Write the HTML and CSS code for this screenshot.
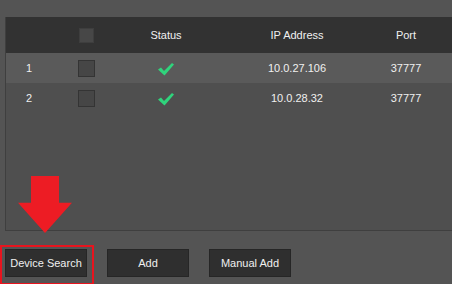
FILE: index.html
```html
<!DOCTYPE html>
<html lang="en">
<head>
  <meta charset="UTF-8">
  <meta name="viewport" content="width=device-width, initial-scale=1.0">
  <title>Device List</title>
  <link rel="stylesheet" href="styles.css">
</head>
<body>
  <div id="device-panel">
    <div class="row head">
      <span></span>
      <span class="cell-check"><i class="box"></i></span>
      <span>Status</span>
      <span>IP Address</span>
      <span>Port</span>
    </div>
    <div class="row odd">
      <span class="idx">1</span>
      <span class="cell-check"><i class="box"></i></span>
      <span class="cell-status">
        <svg width="16" height="14" viewBox="0 0 16 14"><polygon points="0,7.5 3,5.5 6,9 14,1 16,2.5 6.5,13.5" fill="#2fd47c"/></svg>
      </span>
      <span>10.0.27.106</span>
      <span>37777</span>
    </div>
    <div class="row">
      <span class="idx">2</span>
      <span class="cell-check"><i class="box"></i></span>
      <span class="cell-status">
        <svg width="16" height="14" viewBox="0 0 16 14"><polygon points="0,7.5 3,5.5 6,9 14,1 16,2.5 6.5,13.5" fill="#2fd47c"/></svg>
      </span>
      <span>10.0.28.32</span>
      <span>37777</span>
    </div>
  </div>

  <div id="button-bar">
    <button class="tool-button">Device Search</button>
    <button class="tool-button">Add</button>
    <button class="tool-button">Manual Add</button>
  </div>

  <!-- annotation -->
  <div id="hint-arrow"></div>
  <div id="hint-box"></div>
</body>
</html>
```

FILE: styles.css
```css
body {
  margin: 0;
  height: 284px;
  overflow: hidden;
  position: relative;
  font-family: "Liberation Sans", Arial, sans-serif;
  font-size: 11px;
  background: #545454;
  color: #f0f0f0;
}

#device-panel {
  margin: 17px -10px 0 5px;
  height: 213px;
  background: #4f4f4f;
  border-left: 1px solid #3f3f3f;
  border-bottom: 1px solid #3f3f3f;
}

.row {
  display: grid;
  grid-template-columns: 50px 61px 98px 164px 54px 1fr;
  align-items: center;
  height: 30px;
  text-align: center;
}

.row.head {
  height: 36px;
  background: #323232;
}

.row.odd {
  background: #5a5a5a;
}

.idx {
  text-align: left;
  padding-left: 20px;
}

.cell-check,
.cell-status {
  display: flex;
  justify-content: center;
  align-items: center;
}

.box {
  display: block;
  width: 17px;
  height: 17px;
  box-sizing: border-box;
  background: #464646;
  border: 1px solid #343434;
}

.row.head .box {
  width: 15px;
  height: 15px;
  background: #474747;
  border-color: #3e3e3e;
}

.cell-status svg {
  display: block;
  margin-top: 1px;
}

#button-bar {
  display: flex;
  gap: 20px;
  margin: 18px 0 0 5px;
}

.tool-button {
  width: 82px;
  height: 28px;
  padding: 0;
  font-family: inherit;
  font-size: 11px;
  color: #f0f0f0;
  background: #2f2f2f;
  border: 1px solid #262626;
}

#hint-box {
  position: absolute;
  left: 0;
  top: 245px;
  width: 94px;
  height: 40px;
  box-sizing: border-box;
  border: 2px solid #e8141e;
}

#hint-arrow {
  position: absolute;
  left: 18px;
  top: 176px;
  width: 54px;
  height: 57px;
  background: #ed1c24;
  clip-path: polygon(24% 0, 76% 0, 76% 47%, 100% 47%, 50% 100%, 0 47%, 24% 47%);
}
```
